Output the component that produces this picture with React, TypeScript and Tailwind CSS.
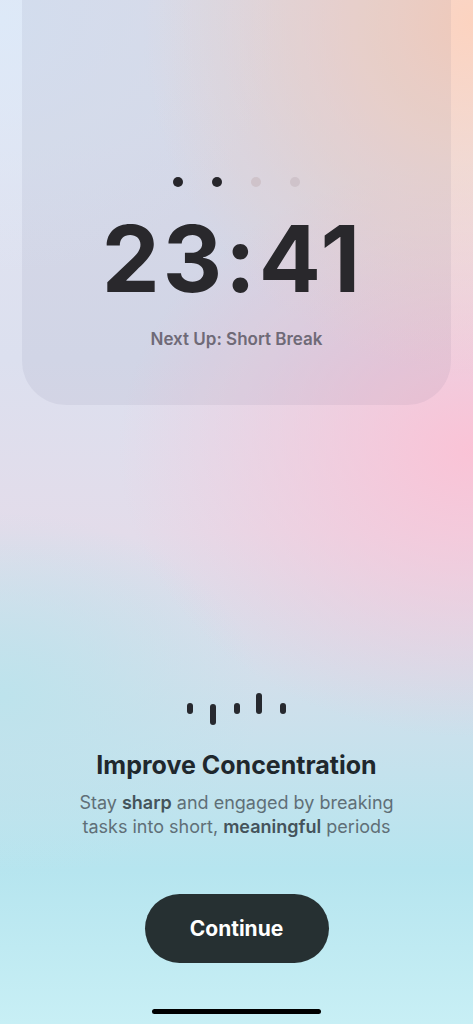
export default function App() {
    const dots = [true, true, false, false]

    return (
        <div className="relative h-[1024px] w-full overflow-hidden font-['Inter','Noto_Sans',sans-serif] bg-[radial-gradient(ellipse_70%_35%_at_100%_2%,#fcd3c0_0%,rgba(252,211,192,0)_100%),radial-gradient(ellipse_75%_28%_at_100%_44%,#fac3d6_0%,rgba(250,195,214,0)_100%),radial-gradient(ellipse_55%_18%_at_0%_68%,#bde3ec_0%,rgba(189,227,236,0)_100%),radial-gradient(ellipse_60%_25%_at_0%_2%,#dde9f8_0%,rgba(221,233,248,0)_100%),linear-gradient(180deg,#e4e5f1_0%,#dce0ef_35%,#e3dcea_52%,#d2dfeb_66%,#b6e5ef_85%,#c8eff5_100%)]">
            <div className="flex flex-col items-center">
                {/* timer card */}
                <div className="mx-[22px] self-stretch h-[405px] rounded-b-[44px] bg-[#5a5f80]/[0.08] flex flex-col items-center pt-[177px]">
                    <div className="flex gap-[29px]">
                        {dots.map((on, i) => (
                            <div
                                key={i}
                                className={on ? "w-[10px] h-[10px] rounded-full bg-[#27262b]" : "w-[10px] h-[10px] rounded-full bg-[#cfc3ca]"}
                            />
                        ))}
                    </div>
                    <div className="mt-[26px] mr-[8px] text-[92px] leading-[92px] font-bold text-[#29282c] tracking-[3px]">23:41</div>
                    <div className="mt-[23px] text-[17px] leading-[22px] font-semibold text-[#6f6a77]">Next Up: Short Break</div>
                </div>

                {/* waveform */}
                <svg className="mt-[285px]" width="113" height="38" viewBox="0 0 113 38" fill="none" stroke="#27292f" strokeWidth="6" strokeLinecap="round">
                    <line x1="10" y1="16" x2="10" y2="21" />
                    <line x1="33" y1="17" x2="33" y2="32" />
                    <line x1="57" y1="16" x2="57" y2="21" />
                    <line x1="79" y1="6" x2="79" y2="21" />
                    <line x1="103" y1="16" x2="103" y2="21" />
                </svg>

                <h1 className="mt-[21px] text-[25px] leading-[32px] font-bold text-[#1f282d]">Improve Concentration</h1>
                <p className="mt-[10px] text-[18px] leading-[24px] text-[#5f6f77] text-center">
                    Stay <span className="font-semibold text-[#44535b]">sharp</span> and engaged by breaking
                    <br />
                    tasks into short, <span className="font-semibold text-[#44535b]">meaningful</span> periods
                </p>

                <button className="mt-[55px] w-[184px] h-[69px] rounded-full bg-[#263032] text-white text-[21px] font-bold">
                    Continue
                </button>

                <div className="mt-[46px] w-[169px] h-[5px] rounded-full bg-black" />
            </div>
        </div>
    )
}
